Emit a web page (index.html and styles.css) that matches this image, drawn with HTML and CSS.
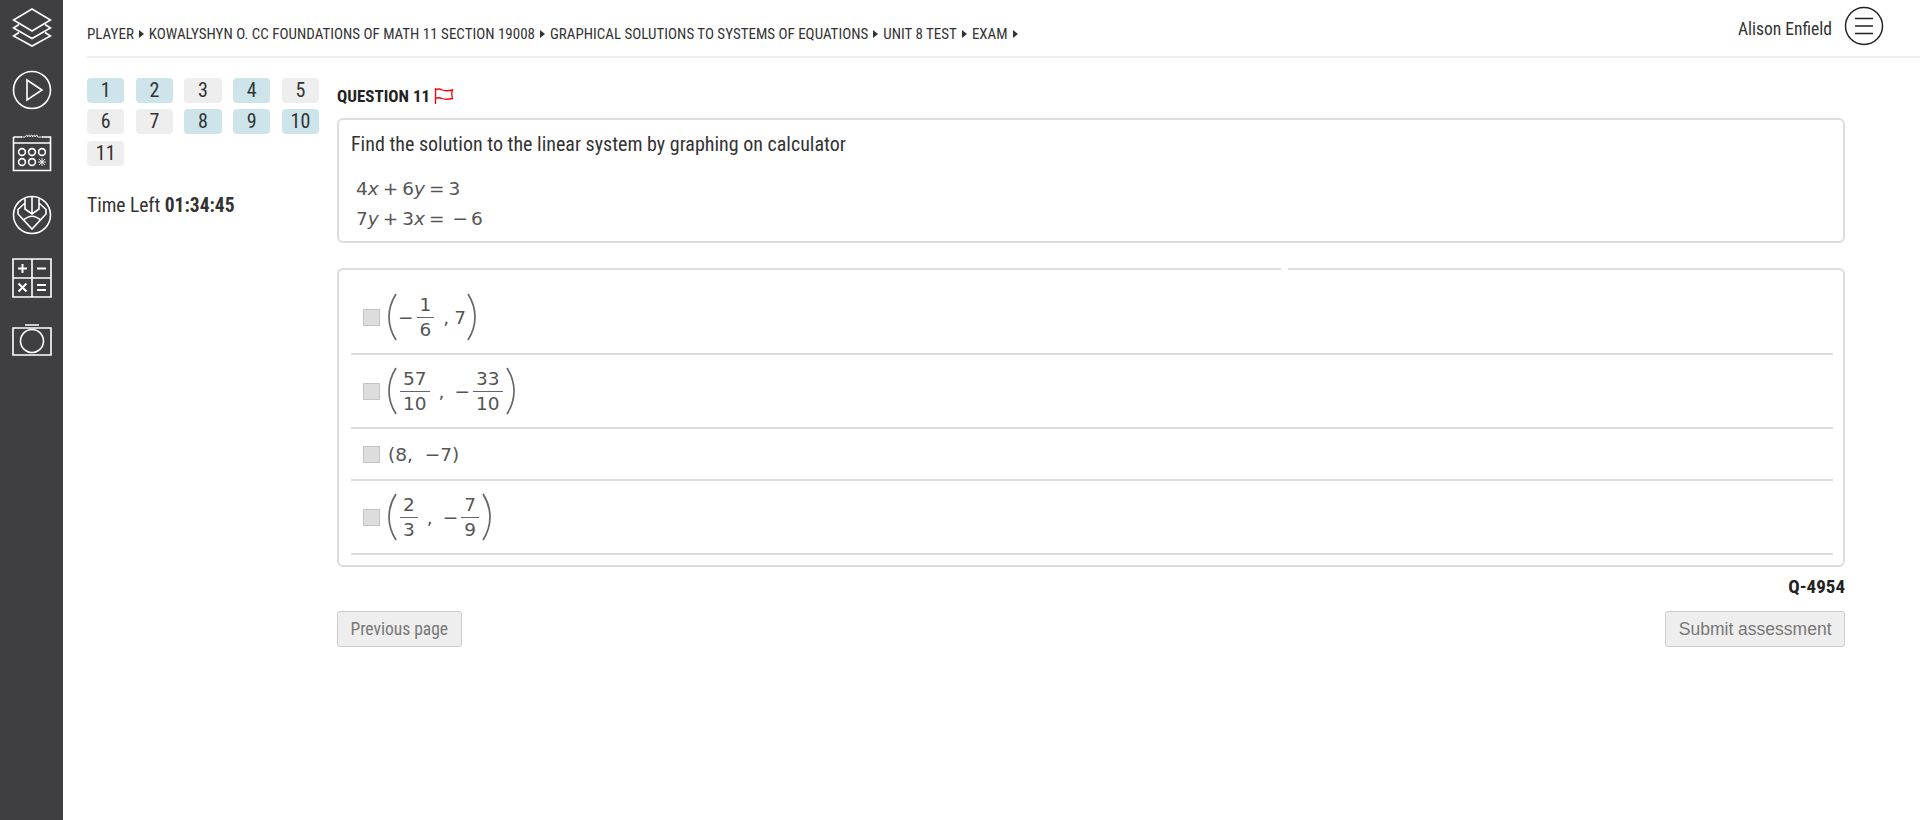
FILE: index.html
```html
<!DOCTYPE html>
<html lang="en">
<head>
    <meta charset="UTF-8">
    <title>Exam</title>
    <link rel="stylesheet" href="styles.css">
</head>
<body>
    <!-- Left icon bar -->
    <nav class="sidebar">
        <svg class="nav-icon" viewBox="0 0 40 40"><path d="M20 1 L38.500 12 L20 23 L1.500 12 Z M7 16.500 L1.500 20 L20 30.500 L38.500 20 L33 16.500 M7 24.500 L1.500 28 L20 38 L38.500 28 L33 24.500"/></svg>
        <svg class="nav-icon" viewBox="0 0 40 40"><circle cx="20" cy="20" r="18.500"/><path d="M15 10 L30 20 L15 30 Z"/></svg>
        <svg class="nav-icon" viewBox="0 0 40 40"><path d="M1.500 4 H10 M30 4 H38.500 V37.500 H1.500 V4 M1.500 10 H38.500"/><path class="thin" d="M9 4 H13 q2.500 -4 2.500 0 q2.500 -4 2.500 0 q2.500 -4 2.500 0 q2.500 -4 2.500 0 q2.500 -4 2.500 0 H31"/><circle cx="10" cy="19" r="3.400"/><circle cx="20" cy="19" r="3.400"/><circle cx="30" cy="19" r="3.400"/><circle cx="10" cy="29" r="3.400"/><circle cx="20" cy="29" r="3.400"/><path class="thin" d="M26 29 H34 M30 25 V33 M27 26 L33 32 M33 26 L27 32"/></svg>
        <svg class="nav-icon" viewBox="0 0 40 40"><circle cx="20" cy="20" r="18.500"/><path d="M13 3.500 V14 L20 19 L27 14 V3.500 M20 2 V19 M13 8 L6 14.500 V19 L20 34 L34 19 V14.500 L27 8 M11 25.500 Q20 17 29 25.500"/></svg>
        <svg class="nav-icon" viewBox="0 0 40 40"><path d="M1 1 H39 V39 H1 Z M20 1 V39 M1 20 H39"/><path class="bold" d="M6 10.500 H15 M10.500 6 V15 M25 10.500 H34 M6.500 25.500 L14.500 33.500 M14.500 25.500 L6.500 33.500 M25 27 H34 M25 32 H34"/></svg>
        <svg class="nav-icon" viewBox="0 0 40 40"><path d="M1 8 H39 V35 H1 Z M13 5 H27"/><circle cx="20" cy="21" r="11.500"/></svg>
    </nav>

    <div class="content">
        <!-- Breadcrumb and user -->
        <header class="topbar">
            <div class="breadcrumb">
                <span>PLAYER</span><i class="arrow"></i>
                <span>KOWALYSHYN O. CC FOUNDATIONS OF MATH 11 SECTION 19008</span><i class="arrow"></i>
                <span>GRAPHICAL SOLUTIONS TO SYSTEMS OF EQUATIONS</span><i class="arrow"></i>
                <span>UNIT 8 TEST</span><i class="arrow"></i>
                <span>EXAM</span><i class="arrow"></i>
            </div>
            <div class="user">
                <span class="user-name">Alison Enfield</span>
                <svg class="menu-icon" viewBox="0 0 40 40"><circle cx="20" cy="20" r="18.500"/><path d="M11 12.500 H29 M11 20 H29 M11 27.500 H29"/></svg>
            </div>
        </header>

        <div class="page">
            <!-- Question numbers and timer -->
            <aside class="side">
                <div class="pills">
                    <span class="pill done">1</span>
                    <span class="pill done">2</span>
                    <span class="pill">3</span>
                    <span class="pill done">4</span>
                    <span class="pill">5</span>
                    <span class="pill">6</span>
                    <span class="pill">7</span>
                    <span class="pill done">8</span>
                    <span class="pill done">9</span>
                    <span class="pill done">10</span>
                    <span class="pill">11</span>
                </div>
                <p class="timer">Time Left <b>01:34:45</b></p>
            </aside>

            <main class="question">
                <h2 class="question-title">QUESTION 11
                    <svg class="flag" viewBox="0 0 20 16"><path d="M1.500 0 V16 M1.500 2 Q5 0 8 2 Q12 3.500 18.500 2 Q17 6 18.500 10.500 Q12 12 8 10.500 Q5 9 1.500 10.500"/></svg>
                </h2>

                <section class="card stem">
                    <p class="stem-text">Find the solution to the linear system by graphing on calculator</p>
                    <div class="math equations">
                        <div>4<em>x</em><span class="op">+</span>6<em>y</em><span class="op">=</span>3</div>
                        <div>7<em>y</em><span class="op">+</span>3<em>x</em><span class="op">=</span><span class="minus">&minus;</span>6</div>
                    </div>
                </section>

                <section class="card answers">
                    <span class="notch"></span>
                    <label class="answer tall">
                        <span class="check"></span>
                        <span class="math expr">
                            <svg class="paren" viewBox="0 0 10 48"><path d="M8 1 Q1 12 1 24 Q1 36 8 47"/></svg>
                            <span class="sign">&minus;</span>
                            <span class="frac"><span>1</span><span>6</span></span>
                            <span class="comma">,</span><span>7</span>
                            <svg class="paren" viewBox="0 0 10 48"><path d="M2 1 Q9 12 9 24 Q9 36 2 47"/></svg>
                        </span>
                    </label>
                    <label class="answer tall">
                        <span class="check"></span>
                        <span class="math expr">
                            <svg class="paren" viewBox="0 0 10 48"><path d="M8 1 Q1 12 1 24 Q1 36 8 47"/></svg>
                            <span class="frac"><span>57</span><span>10</span></span>
                            <span class="comma wide">,</span>
                            <span class="sign">&minus;</span>
                            <span class="frac"><span>33</span><span>10</span></span>
                            <svg class="paren" viewBox="0 0 10 48"><path d="M2 1 Q9 12 9 24 Q9 36 2 47"/></svg>
                        </span>
                    </label>
                    <label class="answer short">
                        <span class="check"></span>
                        <span class="math expr">(8,&nbsp; &minus;7)</span>
                    </label>
                    <label class="answer tall">
                        <span class="check"></span>
                        <span class="math expr">
                            <svg class="paren" viewBox="0 0 10 48"><path d="M8 1 Q1 12 1 24 Q1 36 8 47"/></svg>
                            <span class="frac"><span>2</span><span>3</span></span>
                            <span class="comma wide">,</span>
                            <span class="sign">&minus;</span>
                            <span class="frac"><span>7</span><span>9</span></span>
                            <svg class="paren" viewBox="0 0 10 48"><path d="M2 1 Q9 12 9 24 Q9 36 2 47"/></svg>
                        </span>
                    </label>
                </section>

                <div class="question-id">Q-4954</div>

                <div class="actions">
                    <button class="btn btn-prev">Previous page</button>
                    <button class="btn btn-submit">Submit assessment</button>
                </div>
            </main>
        </div>
    </div>
</body>
</html>
```

FILE: styles.css
```css
/* Base */
body {
    margin: 0;
    min-height: 820px;
    display: flex;
    font-family: "Roboto Condensed", Roboto, sans-serif;
    font-stretch: 75%;
    color: #333;
    background-color: #fff;
}

/* Left icon bar */
.sidebar {
    width: 63px;
    flex-shrink: 0;
    display: flex;
    flex-direction: column;
    align-items: center;
    gap: 22.4px;
    padding-top: 8px;
    box-sizing: border-box;
    background-color: #3f3f41;
}
.nav-icon {
    width: 40px;
    height: 40px;
    fill: none;
    stroke: #fff;
    stroke-width: 1.6;
}
.nav-icon .thin {
    stroke-width: 0.9;
}
.nav-icon .bold {
    stroke-width: 2;
}

/* Top bar */
.content {
    flex: 1;
    padding-left: 24px;
}
.topbar {
    height: 56px;
    display: flex;
    justify-content: space-between;
    border-bottom: 2px solid #eee;
}
.breadcrumb {
    display: flex;
    align-items: center;
    gap: 5px;
    padding-top: 11px;
    font-size: 15px;
    color: #333;
}
.arrow {
    width: 0;
    height: 0;
    border-left: 5px solid #333;
    border-top: 4.500px solid transparent;
    border-bottom: 4.500px solid transparent;
}
.user {
    display: flex;
    align-items: center;
    padding-right: 36px;
    padding-bottom: 4px;
}
.user-name {
    font-size: 17.500px;
    margin: 6px 12px 0 0;
}
.menu-icon {
    width: 40px;
    height: 40px;
    fill: none;
    stroke: #222;
    stroke-width: 1.500;
}

/* Page columns */
.page {
    display: flex;
    padding-top: 20px;
}
.side {
    width: 250px;
    flex-shrink: 0;
}
.pills {
    display: grid;
    grid-template-columns: repeat(5, 37.300px);
    column-gap: 11.400px;
    row-gap: 6.300px;
}
.pill {
    height: 25px;
    line-height: 25px;
    text-align: center;
    font-size: 20px;
    border-radius: 4px;
    background-color: #eee;
}
.pill.done {
    background-color: #cde5ea;
}
.timer {
    margin: 28px 0 0;
    font-size: 19.500px;
}

/* Question column */
.question {
    width: 1508px;
}
.question-title {
    margin: 9px 0 12px;
    height: 19px;
    line-height: 19px;
    font-size: 17px;
    font-weight: 700;
    color: #222;
}
.flag {
    width: 20px;
    height: 16px;
    vertical-align: -2px;
    fill: none;
    stroke: #f00;
    stroke-width: 1.300;
}
.card {
    position: relative;
    box-sizing: border-box;
    border: 2px solid #ddd;
    border-radius: 6px;
}
.stem {
    height: 125px;
    padding: 12px 12px;
}
.stem-text {
    margin: 0;
    font-size: 20px;
    line-height: 24px;
}
.math {
    font-family: "DejaVu Sans", sans-serif;
    font-stretch: normal;
    font-size: 18.500px;
    color: #555;
}
.math em {
    font-style: oblique;
}
.op {
    margin: 0 4px;
}
.minus {
    margin: 0 3px 0 4px;
}
.equations {
    margin: 18px 0 0 5px;
    line-height: 30px;
}

/* Answers */
.answers {
    height: 299px;
    margin-top: 25px;
    padding: 11px 10px 0 12px;
}
.notch {
    position: absolute;
    top: -2px;
    left: 942px;
    width: 7px;
    height: 2px;
    background-color: #fff;
}
.answer {
    display: flex;
    align-items: center;
    border-bottom: 2px solid #ddd;
    box-sizing: border-box;
}
.answer.tall {
    height: 74px;
}
.answer.short {
    height: 52px;
}
.check {
    width: 15px;
    height: 15px;
    margin: 0 8px 0 12px;
    border: 1px solid #c4c4c4;
    background-color: #ddd;
}
.expr {
    display: flex;
    align-items: center;
}
.paren {
    width: 10px;
    height: 48px;
    fill: none;
    stroke: #666;
    stroke-width: 1.700;
}
.frac {
    display: flex;
    flex-direction: column;
    text-align: center;
    margin: 0 2px;
    line-height: 24px;
}
.frac span {
    padding: 0 3px;
}
.frac span:first-child {
    border-bottom: 1.500px solid #666;
}
.sign {
    margin-right: 1px;
}
.comma {
    margin: 0 5px 0 7px;
}
.comma.wide {
    margin: 0 10px 0 7px;
}

/* Footer of the question */
.question-id {
    margin-top: 9px;
    text-align: right;
    font-size: 19px;
    font-weight: 700;
    color: #222;
    line-height: 22px;
}
.actions {
    display: flex;
    justify-content: space-between;
    margin-top: 13px;
}
.btn {
    height: 36px;
    border: 1px solid #ccc;
    border-radius: 3px;
    background-color: #eee;
    color: #777;
    padding: 0 12.500px;
}
.btn-prev {
    font-family: "Roboto Condensed", Roboto, sans-serif;
    font-stretch: 75%;
    font-size: 17.500px;
}
.btn-submit {
    font-family: "Liberation Sans", Arial, sans-serif;
    font-size: 17.500px;
}
```
